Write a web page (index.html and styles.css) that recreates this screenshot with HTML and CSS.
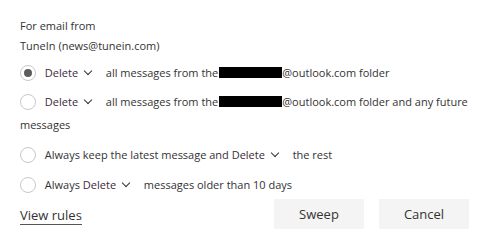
FILE: index.html
```html
<!DOCTYPE html>
<html lang="en">
<head>
    <meta charset="UTF-8">
    <meta name="viewport" content="width=device-width, initial-scale=1.0">
    <title>Sweep</title>
    <link rel="stylesheet" href="styles.css">
</head>
<body>
    <div class="sweep-panel">
        <div class="sender">
            <div class="sender-label">For email from</div>
            <div class="sender-name">TuneIn (news@tunein.com)</div>
        </div>

        <div class="option">
            <span class="radio checked"></span>
            <span class="select">Delete <span class="chevron"></span></span>
            <span class="text">all messages from the<span class="redact"></span>@outlook.com folder</span>
        </div>

        <div class="option">
            <span class="radio"></span>
            <span class="select">Delete <span class="chevron"></span></span>
            <span class="text">all messages from the<span class="redact"></span>@outlook.com folder and any future</span><br>
            <span class="text">messages</span>
        </div>

        <div class="option">
            <span class="radio"></span>
            <span class="text">Always keep the latest message and</span>
            <span class="select">Delete <span class="chevron"></span></span>
            <span class="text">the rest</span>
        </div>

        <div class="option">
            <span class="radio"></span>
            <span class="text">Always</span>
            <span class="select">Delete <span class="chevron"></span></span>
            <span class="text">messages older than 10 days</span>
        </div>

        <div class="footer">
            <a class="view-rules" href="#">View rules</a>
            <div class="buttons">
                <button class="btn">Sweep</button>
                <button class="btn">Cancel</button>
            </div>
        </div>
    </div>
</body>
</html>
```

FILE: styles.css
```css
* {
    margin: 0;
    padding: 0;
    box-sizing: border-box;
}

body, html {
    height: 100%;
    background: #fff;
    font-family: "Open Sans", "Noto Sans", sans-serif;
    font-size: 11px;
    color: #333;
}

.sweep-panel {
    padding: 16px 19px 0 20px;
}

.sender {
    line-height: 20px;
}

.option {
    line-height: 23px;
    margin-top: 7px;
}

.sender + .option {
    margin-top: 5px;
}

.sender + .option + .option {
    margin-top: 6px;
}

.radio {
    display: inline-block;
    width: 16px;
    height: 16px;
    border: 1px solid #c8c8c8;
    border-radius: 50%;
    vertical-align: -4px;
    margin-right: 6px;
    position: relative;
}

.radio.checked::after {
    content: '';
    position: absolute;
    top: 3px;
    left: 3px;
    width: 8px;
    height: 8px;
    border-radius: 50%;
    background: #5c5c5c;
}

.select {
    color: #3c2a3c;
    margin-right: 12px;
}

.chevron {
    display: inline-block;
    width: 6px;
    height: 6px;
    border-right: 1.5px solid #333;
    border-bottom: 1.5px solid #333;
    transform: rotate(45deg);
    vertical-align: 3px;
    margin-left: 4px;
}

.redact {
    display: inline-block;
    width: 63px;
    height: 11px;
    background: #000;
    vertical-align: -1px;
    margin-left: 1px;
}

.footer {
    display: flex;
    align-items: center;
    justify-content: space-between;
    margin-top: 3px;
}

.view-rules {
    font-size: 13px;
    color: #333;
    text-decoration: none;
    border-bottom: 1px solid #555;
    line-height: 16px;
    padding-bottom: 1px;
    margin-top: 4px;
}

.buttons {
    display: flex;
    gap: 15px;
}

.btn {
    width: 90px;
    height: 30px;
    border: none;
    background: #f4f4f4;
    font-family: "Open Sans", "Noto Sans", sans-serif;
    font-size: 13px;
    color: #333;
}
```
